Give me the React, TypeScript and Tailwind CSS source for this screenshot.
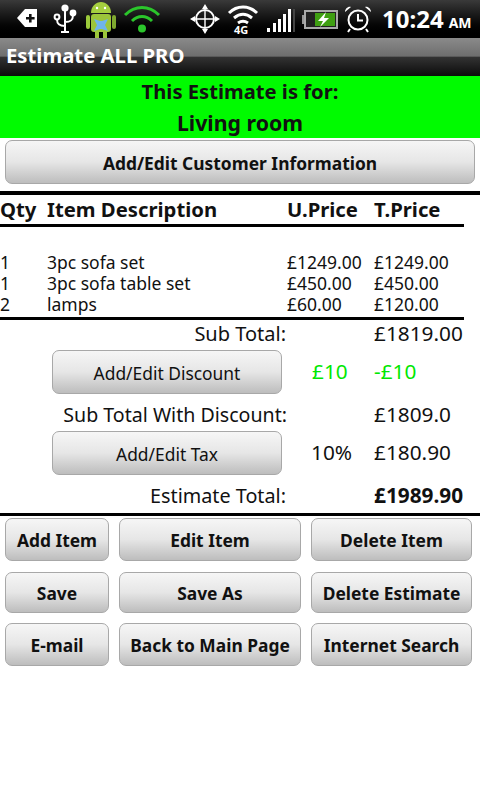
const font = { fontFamily: '"Noto Sans", "Open Sans", sans-serif' };

function Btn({ label, className, bold = true }: { label: string; className: string; bold?: boolean }) {
  return (
    <button
      className={`flex items-center justify-center rounded-[7px] border border-[#a8a8a8] bg-gradient-to-b from-[#f6f6f6] via-[#e6e6e6] to-[#bdbdbd] pt-[3px] text-[17.4px] leading-none text-[#111] ${bold ? 'font-bold' : ''} ${className}`}
    >
      {label}
    </button>
  );
}

function StatusIcons() {
  return (
    <>
      {/* back/notification tag */}
      <svg className="absolute left-[16px] top-[7px]" width="22" height="22" viewBox="0 0 22 22">
        <path d="M21 2H9L1 11l8 9h12z" fill="#fff" />
        <path d="M13 7v3h-3v2.4h3v3h2.6v-3h3V10h-3V7z" fill="#111" />
      </svg>
      {/* usb */}
      <svg className="absolute left-[53px] top-[4px]" width="24" height="30" viewBox="0 0 24 30" fill="none" stroke="#fff" strokeWidth="2">
        <path d="M12 5v22M8 28h8M12 22c-7 0-8-3-8-7M12 18c6 0 8-2 8-7" />
        <circle cx="12" cy="4" r="2.6" fill="#fff" />
        <circle cx="4" cy="13" r="2.4" />
        <circle cx="20" cy="9" r="2.4" fill="#fff" />
      </svg>
      {/* android with box */}
      <svg className="absolute left-[85px] top-0" width="32" height="38" viewBox="0 0 32 38">
        <rect x="1" y="15" width="4" height="14" rx="2" fill="#9ccb3b" />
        <rect x="27" y="15" width="4" height="14" rx="2" fill="#7fa92f" />
        <path d="M6 13C6 6 11 2 16 2s10 4 10 11z" fill="#a5cf3f" />
        <rect x="6" y="14" width="20" height="18" rx="3" fill="#9cc53a" />
        <rect x="10" y="30" width="4" height="8" fill="#9cc53a" />
        <rect x="18" y="30" width="4" height="8" fill="#9cc53a" />
        <circle cx="12" cy="8" r="1.2" fill="#fff" />
        <circle cx="20" cy="8" r="1.2" fill="#fff" />
        <path d="M9 19l6 2h2l6-2-3 6 3 6-6-2h-2l-6 2 3-6z" fill="#6fb4ea" />
      </svg>
      {/* wifi green */}
      <svg className="absolute left-[123px] top-[5px]" width="38" height="28" viewBox="0 0 38 28" fill="none" stroke="#2bc62b" strokeWidth="3">
        <path d="M2 10c10-10 24-10 34 0M9 16c6-6 14-6 20 0" />
        <circle cx="19" cy="23.5" r="4" fill="#2bc62b" stroke="none" />
      </svg>
      {/* gps */}
      <svg className="absolute left-[190px] top-[4px]" width="30" height="30" viewBox="0 0 30 30" fill="none" stroke="#fff" strokeWidth="2">
        <circle cx="15" cy="15" r="9" />
        <path d="M15 6v18M6 15h18" strokeWidth="1.4" />
        <path d="M15 0l3 5h-6zM15 30l3-5h-6zM0 15l5-3v6zM30 15l-5-3v6z" fill="#fff" stroke="none" />
      </svg>
      {/* wifi 4g */}
      <svg className="absolute left-[227px] top-[4px]" width="32" height="22" viewBox="0 0 32 22" fill="none" stroke="#fff" strokeWidth="3">
        <path d="M2 9c8-8 20-8 28 0M7 14c6-5 12-5 18 0M11 19c3-2 7-2 10 0" />
      </svg>
      <span className="absolute left-[234px] top-[24px] text-[11px] font-bold leading-[11px] text-white">4G</span>
      {/* signal */}
      <svg className="absolute left-[266px] top-[8px]" width="30" height="25" viewBox="0 0 30 25" fill="#fff">
        <rect x="1" y="20" width="3" height="4" />
        <rect x="7" y="15" width="3" height="9" />
        <rect x="12" y="11" width="3" height="13" />
        <rect x="17" y="6" width="3" height="18" />
        <rect x="22" y="1" width="3" height="23" />
        <rect x="27" y="1" width="2" height="23" fill="#444" />
      </svg>
      {/* battery */}
      <svg className="absolute left-[302px] top-[9px]" width="36" height="21" viewBox="0 0 36 21">
        <rect x="0" y="6" width="3" height="9" fill="#999" />
        <rect x="3" y="2" width="32" height="17" fill="#222" stroke="#aaa" strokeWidth="2" />
        <rect x="13" y="4" width="20" height="13" fill="#3f9f12" />
        <path d="M24 3l-8 9h5l-3 6 9-9h-5z" fill="#fff" />
      </svg>
      {/* alarm */}
      <svg className="absolute left-[344px] top-[5px]" width="28" height="28" viewBox="0 0 28 28" fill="none" stroke="#fff" strokeWidth="2">
        <circle cx="14" cy="15" r="9.5" />
        <path d="M14 9v6.5h5M6 24l-2 3M22 24l2 3" />
        <path d="M1 7c0-3 3-6 6-5zM27 7c0-3-3-6-6-5z" fill="#fff" stroke="none" />
      </svg>
    </>
  );
}

export default function App() {
  return (
    <div className="flex h-[800px] w-[480px] flex-col overflow-hidden bg-white text-[#111]" style={font}>
      {/* Status bar */}
      <div className="relative h-[38px] bg-gradient-to-b from-[#3a3a3a] via-[#111] to-black">
        <StatusIcons />
        <div className="absolute left-[382px] top-[3px] flex items-baseline font-bold text-white">
          <span className="text-[24px] leading-[32px]">10:24</span>
          <span className="ml-[5px] text-[14px] leading-[32px]">AM</span>
        </div>
      </div>

      {/* Title */}
      <div className="flex h-[38px] items-center bg-[linear-gradient(#8a8a8a_0,#6e6e6e_48%,#333_50%,#0b0b0b_100%)] pb-[3px] pl-[6px] text-[20.3px] font-bold text-white">
        Estimate ALL PRO
      </div>

      {/* Green header */}
      <div className="flex h-[62px] flex-col items-center bg-[#00fb00] font-bold leading-[32px]">
        <div className="-mt-[1px] text-[20.2px]">This Estimate is for:</div>
        <div className="text-[21.3px]">Living room</div>
      </div>

      <div className="px-[5px] pt-[2px]">
        <Btn label="Add/Edit Customer Information" className="h-[44px] w-[470px]" />
      </div>

      <div className="mt-[7px] h-[4px] bg-black" />

      {/* Column heads */}
      <div className="flex h-[32px] w-[464px] items-center border-b-[3px] border-black text-[20.3px] font-bold">
        <span className="w-[47px]">Qty</span>
        <span className="w-[240px]">Item Description</span>
        <span className="w-[87px]">U.Price</span>
        <span>T.Price</span>
      </div>

      {/* Items */}
      <div className="mt-[25px] flex w-[464px] flex-col border-b-[3px] border-black pb-[2px] text-[17.5px] leading-[21px]">
        {[
          ['1', '3pc sofa set', '£1249.00', '£1249.00'],
          ['1', '3pc sofa table set', '£450.00', '£450.00'],
          ['2', 'lamps', '£60.00', '£120.00'],
        ].map(([q, d, u, t]) => (
          <div key={d} className="flex">
            <span className="w-[47px]">{q}</span>
            <span className="w-[240px]">{d}</span>
            <span className="w-[87px]">{u}</span>
            <span>{t}</span>
          </div>
        ))}
      </div>

      {/* Totals */}
      <div className="flex h-[30px] items-center pb-[2px] text-[20.8px]">
        <span className="w-[286px] text-right text-[20px]">Sub Total:</span>
        <span className="ml-[88px]">£1819.00</span>
      </div>
      <div className="flex h-[44px] items-center text-[20.8px]">
        <Btn label="Add/Edit Discount" bold={false} className="ml-[52px] h-[44px] w-[230px]" />
        <span className="ml-[30px] w-[62px] text-[#00e800]">£10</span>
        <span className="text-[#00e800]">-£10</span>
      </div>
      <div className="flex h-[37px] items-center pt-[4px] text-[20.8px]">
        <span className="w-[287px] text-right text-[19.6px]">Sub Total With Discount:</span>
        <span className="ml-[87px]">£1809.0</span>
      </div>
      <div className="flex h-[44px] items-center text-[20.8px]">
        <Btn label="Add/Edit Tax" bold={false} className="ml-[52px] h-[44px] w-[230px]" />
        <span className="ml-[29px] w-[63px]">10%</span>
        <span>£180.90</span>
      </div>
      <div className="flex h-[38px] items-center pt-[3px] text-[20.8px]">
        <span className="w-[286px] text-right text-[19.8px]">Estimate Total:</span>
        <span className="ml-[88px] font-bold">£1989.90</span>
      </div>
      <div className="h-[3px] bg-black" />

      {/* Actions */}
      <div className="mt-[2px] grid grid-cols-[104px_182px_161px] gap-x-[10px] pl-[5px]">
        <Btn label="Add Item" className="h-[43px]" />
        <Btn label="Edit Item" className="h-[43px]" />
        <Btn label="Delete Item" className="h-[43px]" />
        <Btn label="Save" className="mt-[11px] h-[41px]" />
        <Btn label="Save As" className="mt-[11px] h-[41px]" />
        <Btn label="Delete Estimate" className="mt-[11px] h-[41px]" />
        <Btn label="E-mail" className="mt-[10px] h-[43px]" />
        <Btn label="Back to Main Page" className="mt-[10px] h-[43px]" />
        <Btn label="Internet Search" className="mt-[10px] h-[43px]" />
      </div>
    </div>
  );
}
